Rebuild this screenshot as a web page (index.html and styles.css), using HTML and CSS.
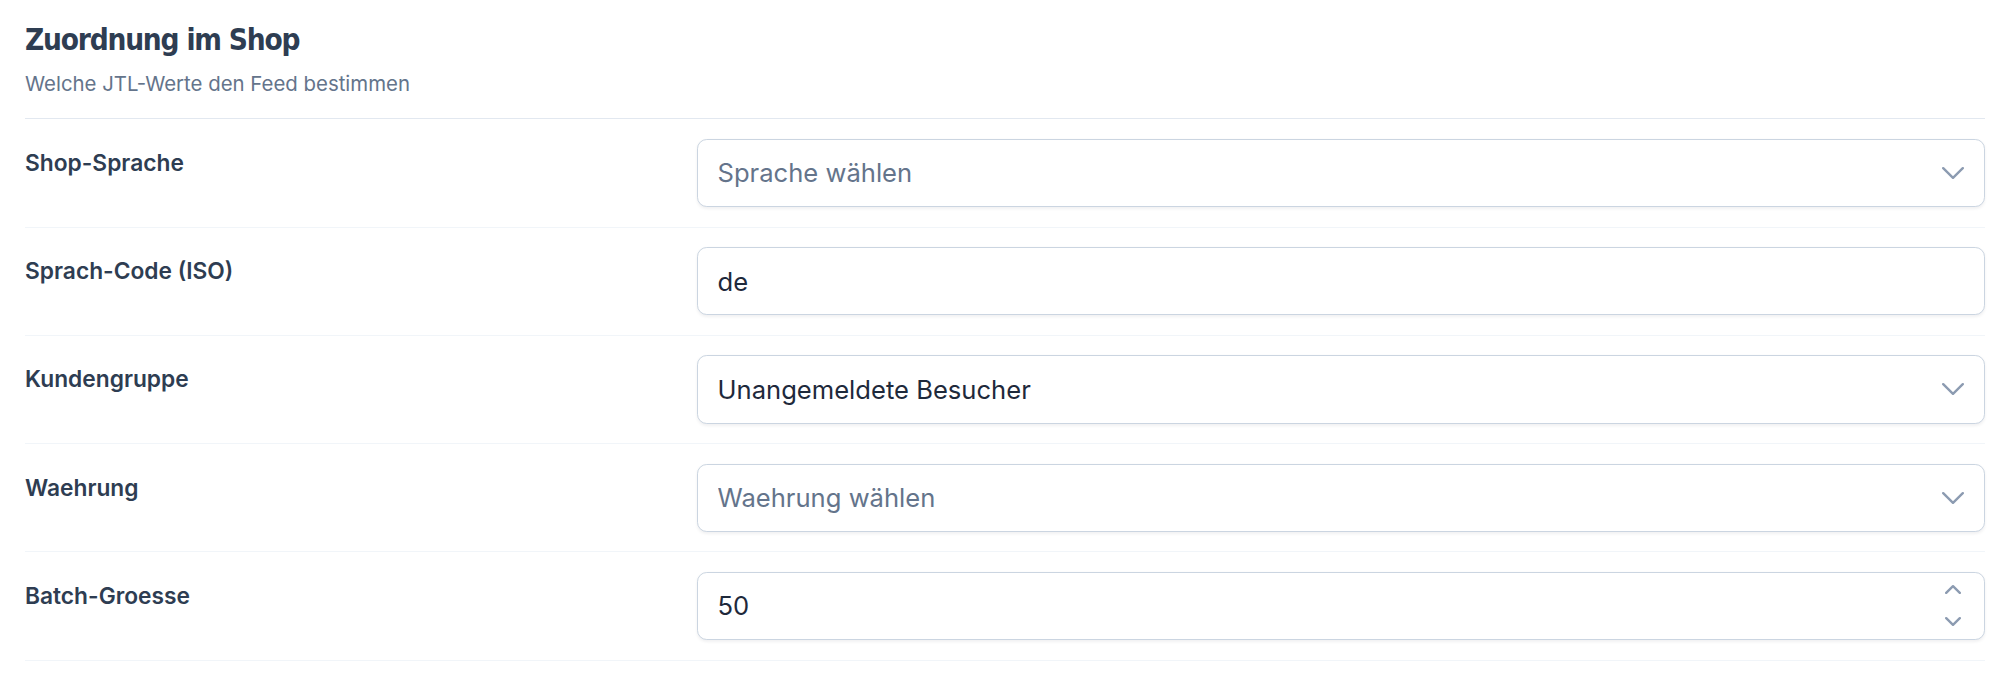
FILE: index.html
```html
<!DOCTYPE html>
<html lang="de">
<head>
<meta charset="utf-8">
<title>Zuordnung im Shop</title>
<link rel="stylesheet" href="styles.css">
</head>
<body>
<section class="panel">
  <header class="panel-head">
    <h2 class="title">Zuordnung im Shop</h2>
    <p class="subtitle">Welche JTL-Werte den Feed bestimmen</p>
  </header>

  <div class="row">
    <label class="label" for="lang">Shop-Sprache</label>
    <div class="control">
      <select id="lang" class="field is-placeholder">
        <option selected>Sprache wählen</option>
        <option>Deutsch</option>
        <option>English</option>
      </select>
      <svg class="chev" viewBox="0 0 22 12" aria-hidden="true"><polyline points="1.2,1.2 11,10.8 20.8,1.2"/></svg>
    </div>
  </div>

  <div class="row">
    <label class="label" for="iso">Sprach-Code (ISO)</label>
    <div class="control">
      <input id="iso" class="field" type="text" value="de">
    </div>
  </div>

  <div class="row">
    <label class="label" for="group">Kundengruppe</label>
    <div class="control">
      <select id="group" class="field">
        <option selected>Unangemeldete Besucher</option>
        <option>Händler</option>
      </select>
      <svg class="chev" viewBox="0 0 22 12" aria-hidden="true"><polyline points="1.2,1.2 11,10.8 20.8,1.2"/></svg>
    </div>
  </div>

  <div class="row">
    <label class="label" for="cur">Waehrung</label>
    <div class="control">
      <select id="cur" class="field is-placeholder">
        <option selected>Waehrung wählen</option>
        <option>EUR</option>
      </select>
      <svg class="chev" viewBox="0 0 22 12" aria-hidden="true"><polyline points="1.2,1.2 11,10.8 20.8,1.2"/></svg>
    </div>
  </div>

  <div class="row">
    <label class="label" for="batch">Batch-Groesse</label>
    <div class="control">
      <input id="batch" class="field field-number" type="number" value="50">
      <div class="spin" aria-hidden="true">
        <svg class="spin-icon" viewBox="0 0 16 9"><polyline points="1.2,7.8 8,1.2 14.8,7.8"/></svg>
        <svg class="spin-icon" viewBox="0 0 16 9"><polyline points="1.2,1.2 8,7.8 14.8,1.2"/></svg>
      </div>
    </div>
  </div>
</section>
</body>
</html>
```

FILE: styles.css
```css
html, body {
  margin: 0;
  padding: 0;
  background: #ffffff;
}

body {
  font-family: "Inter", "Noto Sans", "Liberation Sans", sans-serif;
  color: #334155;
}

.panel {
  padding: 0 21px 0 25px;
}

.panel-head {
  padding: 23.4px 0 21px;
  border-bottom: 1.5px solid #e2e8f0;
}

.title {
  margin: 0;
  font-family: "DejaVu Sans Condensed", "DejaVu Sans", sans-serif;
  font-stretch: condensed;
  font-weight: 700;
  font-size: 29.5px;
  line-height: 35.1px;
  letter-spacing: -1.2px;
  color: #2e3d52;
}

.subtitle {
  margin: 11.5px 0 0;
  font-size: 20.4px;
  line-height: 27.3px;
  font-weight: 400;
  color: #64748b;
}

.row {
  display: grid;
  grid-template-columns: 1fr 2fr;
  column-gap: 28px;
  align-items: start;
  padding: 19.5px 0;
  border-bottom: 1.5px solid #f1f5f9;
}

.label {
  padding-top: 7px;
  font-size: 22.75px;
  line-height: 34px;
  font-weight: 600;
  color: #2e3d52;
}

.control {
  position: relative;
}

.field {
  display: block;
  width: 100%;
  height: 68.25px;
  box-sizing: border-box;
  margin: 0;
  padding: 0 64px 0 19.5px;
  border: 1.5px solid #cbd5e1;
  border-radius: 9.75px;
  background: #ffffff;
  box-shadow: 0 1.5px 3px rgba(15, 23, 42, 0.06);
  font-family: "Inter", "Noto Sans", "Liberation Sans", sans-serif;
  font-size: 25.6px;
  font-weight: 400;
  color: #1e293b;
  -webkit-appearance: none;
  appearance: none;
  outline: none;
}

.field.is-placeholder {
  color: #64748b;
}

.field-number {
  -moz-appearance: textfield;
}

.field-number::-webkit-inner-spin-button,
.field-number::-webkit-outer-spin-button {
  -webkit-appearance: none;
  margin: 0;
}

.chev {
  position: absolute;
  right: 21px;
  top: 50%;
  width: 22px;
  height: 12px;
  margin-top: -6px;
  pointer-events: none;
}

.chev polyline,
.spin-icon polyline {
  fill: none;
  stroke: #8c9bb1;
  stroke-width: 2.4;
  stroke-linecap: round;
  stroke-linejoin: round;
}

.spin {
  position: absolute;
  right: 24px;
  top: 13px;
  display: flex;
  flex-direction: column;
  gap: 23px;
  pointer-events: none;
}

.spin-icon {
  display: block;
  width: 16px;
  height: 9px;
}
```
